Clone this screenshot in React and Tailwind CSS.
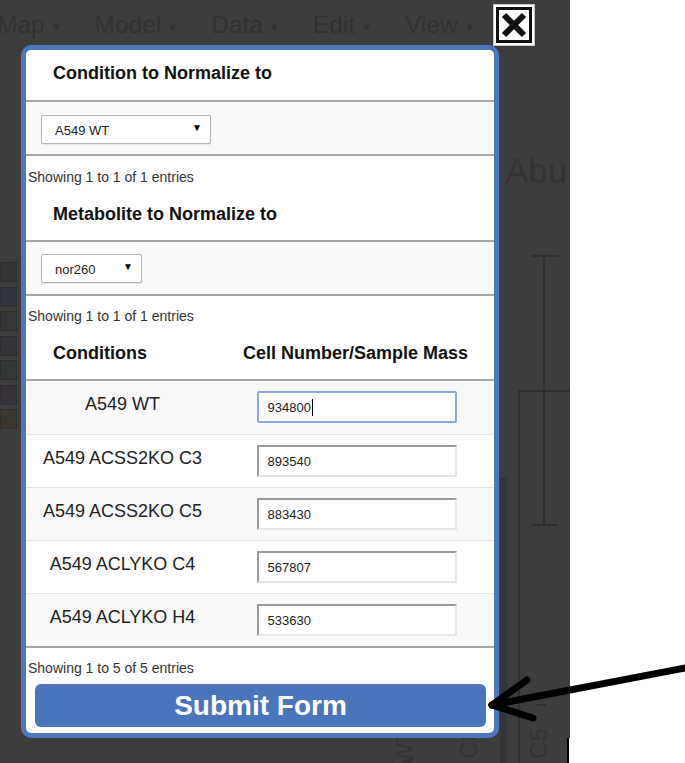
import React from 'react';

const navItems = ['Map', 'Model', 'Data', 'Edit', 'View'];

const legend = ['#343434', '#31343b', '#363636', '#33353b', '#323833', '#373239', '#3b352f'];

const rows = [
  { name: 'A549 WT', value: '934800', focused: true },
  { name: 'A549 ACSS2KO C3', value: '893540' },
  { name: 'A549 ACSS2KO C5', value: '883430' },
  { name: 'A549 ACLYKO C4', value: '567807' },
  { name: 'A549 ACLYKO H4', value: '533630' },
];

function FakeSelect({ value, width }) {
  return (
    <div className={`relative h-[29px] ${width}`}>
      <select
        defaultValue={value}
        className="appearance-none w-full h-full bg-white border border-[#b3b3b3] rounded-[2px] pl-[13px] pt-[2px] text-[13px] text-[#222] shadow-[0_1px_1px_rgba(0,0,0,0.08)] outline-none"
      >
        <option value={value}>{value}</option>
      </select>
      <span className="absolute right-[9px] top-[5px] text-[10px] text-black pointer-events-none">▼</span>
    </div>
  );
}

function Showing({ text }) {
  return <p className="pl-[2px] text-[14px] leading-[16px] text-[#333]">{text}</p>;
}

export default function App() {
  return (
    <div className="relative w-[685px] h-[763px] overflow-hidden bg-white font-['Liberation_Sans',Arial,sans-serif]">
      {/* dimmed page behind the dialog */}
      <div className="relative w-[570px] h-full bg-[#3d3d3d] overflow-hidden">
        <div className="h-[52px] flex items-center gap-[33px] -ml-[3px] text-[24.5px] text-[#313131] border-b border-[#393939]">
          {navItems.map((n) => (
            <span key={n} className="flex items-center">
              {n}
              <span className="ml-[6px] text-[11px] mt-[4px]">▼</span>
            </span>
          ))}
        </div>

        <div className="mt-[210px] w-[17px] flex flex-col gap-[4.5px]">
          {legend.map((c, i) => (
            <div key={i} className="h-[20px] border border-[#2e2e2e]" style={{ backgroundColor: c }} />
          ))}
        </div>

        {/* chart behind the overlay */}
        <svg className="absolute inset-0 pointer-events-none" width="570" height="763">
          <text x="505" y="183" fontSize="35" fill="#333" fontFamily="Liberation Sans, Arial, sans-serif">Abu</text>
          <g stroke="#2d2d2d" strokeWidth="1.5" fill="none">
            <line x1="544" y1="256" x2="544" y2="525" />
            <line x1="531" y1="256" x2="558" y2="256" />
            <line x1="531" y1="525" x2="558" y2="525" />
            <path d="M519 763 V391 H570" />
            <line x1="537" y1="705" x2="546" y2="705" />
          </g>
          <rect x="500" y="478" width="7" height="285" fill="#353535" />
          <g fontSize="24" fill="#333" fontFamily="Liberation Sans, Arial, sans-serif" textAnchor="end">
            <text transform="translate(413 728) rotate(-90)">A549 WT</text>
            <text transform="translate(477 728) rotate(-90)">A549 ACSS2KO C3</text>
            <text transform="translate(547 728) rotate(-90)">A549 ACSS2KO C5</text>
          </g>
        </svg>
      </div>
      <div className="absolute left-[567px] top-[738px] w-[3px] h-[25px] bg-white border-l-2 border-black" />

      {/* dialog */}
      <div className="absolute left-[21px] top-[45px] w-[478px] h-[693px] border-[5px] border-[#4c78bd] rounded-[10px] bg-white overflow-hidden">
        <div className="h-[50px] pl-[27px] pt-[12px]">
          <h3 className="text-[18px] leading-[22px] font-bold text-[#111]">Condition to Normalize to</h3>
        </div>

        <div className="h-[54px] border-t-2 border-[#a6a6a6] bg-[#f9f9f9] pl-[15px] pt-[13px]">
          <FakeSelect value="A549 WT" width="w-[170px]" />
        </div>

        <div className="h-[86px] border-t-2 border-[#a6a6a6] pt-[13px]">
          <Showing text="Showing 1 to 1 of 1 entries" />
          <h3 className="mt-[18px] pl-[27px] text-[18px] leading-[22px] font-bold text-[#111]">Metabolite to Normalize to</h3>
        </div>

        <div className="h-[54px] border-t-2 border-[#a6a6a6] bg-[#f9f9f9] pl-[15px] pt-[12px]">
          <FakeSelect value="nor260" width="w-[101px]" />
        </div>

        <div className="h-[85px] border-t-2 border-[#a6a6a6] pt-[12px]">
          <Showing text="Showing 1 to 1 of 1 entries" />
          <div className="mt-[18px] flex text-[18px] leading-[22px] font-bold text-[#111]">
            <div className="w-[193px] pl-[27px]">Conditions</div>
            <div className="flex-1 pl-[24px]">Cell Number/Sample Mass</div>
          </div>
        </div>

        <div className="border-t-2 border-[#a6a6a6]">
          {rows.map((r, i) => (
            <div
              key={r.name}
              className={`h-[53px] flex items-start ${i % 2 === 0 ? 'bg-[#f9f9f9]' : 'bg-white'} ${i > 0 ? 'border-t border-[#e6e6e6]' : ''}`}
            >
              <div className="w-[193px] pt-[12px] text-center text-[18px] leading-[22px] text-[#222]">{r.name}</div>
              <div className="flex-1 flex justify-center pt-[10px]">
                <div className="relative">
                  <input
                    defaultValue={r.value}
                    className={
                      r.focused
                        ? 'w-[200px] h-[32px] pl-[9px] text-[13px] text-[#222] bg-white border-2 border-[#8aa8e6] rounded-[2px] outline-none'
                        : 'w-[200px] h-[32px] pl-[9px] text-[13px] text-[#222] bg-white border-2 border-t-[#9a9a9a] border-l-[#9a9a9a] border-b-[#e6e6e6] border-r-[#e6e6e6] outline-none'
                    }
                  />
                  {r.focused && <span className="absolute left-[55px] top-[8px] w-px h-[17px] bg-black" />}
                </div>
              </div>
            </div>
          ))}
        </div>

        <div className="border-t-2 border-[#a6a6a6] pt-[12px]">
          <Showing text="Showing 1 to 5 of 5 entries" />
          <button className="mt-[8px] ml-[9px] w-[451px] h-[43px] rounded-[6px] bg-[#4a75ba] text-white text-[28px] font-bold leading-none">
            Submit Form
          </button>
        </div>
      </div>

      {/* close box */}
      <div className="absolute left-[493px] top-[4px] w-[42px] h-[42px] border border-[#c4c4c4] bg-white p-[2px]">
        <div className="w-full h-full border-[3px] border-[#111] flex items-center justify-center">
          <svg width="30" height="30" viewBox="0 0 30 30">
            <path d="M5 5 L25 25 M25 5 L5 25" stroke="#111" strokeWidth="6" strokeLinecap="butt" />
          </svg>
        </div>
      </div>

      {/* annotation arrow */}
      <svg className="absolute left-[480px] top-[650px]" width="205" height="80" viewBox="0 0 205 80">
        <g stroke="#000" strokeWidth="7" strokeLinecap="round" fill="none">
          <line x1="12" y1="55" x2="210" y2="17" />
          <line x1="12" y1="55" x2="47" y2="30" />
          <line x1="12" y1="55" x2="53" y2="68" />
        </g>
      </svg>
    </div>
  );
}
